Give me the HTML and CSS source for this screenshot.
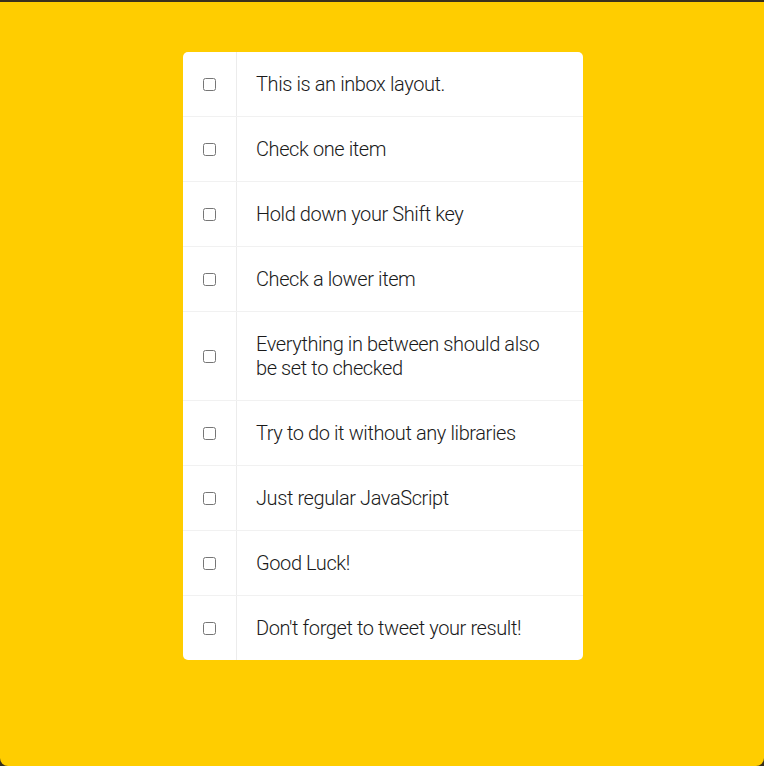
FILE: index.html
```html
<!DOCTYPE html>
<html lang="en">
<head>
<meta charset="UTF-8">
<title>Hold Shift to Check Checkboxes</title>
<link rel="stylesheet" href="styles.css">
</head>
<body>
  <div class="inbox">
    <div class="item">
      <input type="checkbox">
      <p>This is an inbox layout.</p>
    </div>
    <div class="item">
      <input type="checkbox">
      <p>Check one item</p>
    </div>
    <div class="item">
      <input type="checkbox">
      <p>Hold down your Shift key</p>
    </div>
    <div class="item">
      <input type="checkbox">
      <p>Check a lower item</p>
    </div>
    <div class="item">
      <input type="checkbox">
      <p>Everything in between should also be set to checked</p>
    </div>
    <div class="item">
      <input type="checkbox">
      <p>Try to do it without any libraries</p>
    </div>
    <div class="item">
      <input type="checkbox">
      <p>Just regular JavaScript</p>
    </div>
    <div class="item">
      <input type="checkbox">
      <p>Good Luck!</p>
    </div>
    <div class="item">
      <input type="checkbox">
      <p>Don't forget to tweet your result!</p>
    </div>
  </div>
</body>
</html>
```

FILE: styles.css
```css
html {
  background: #3a301c;
  font-family: Roboto, "Liberation Sans", Arial, sans-serif;
  font-size: 20px;
  font-weight: 300;
}

body {
  margin: 2px 0 0;
  min-height: calc(100vh - 2px);
  box-sizing: border-box;
  padding: 50px 0 50px 2px;
  background: #ffcd00;
  border-radius: 0 0 8px 8px;
}

.inbox {
  max-width: 400px;
  margin: 0 auto;
  background: #ffffff;
  border-radius: 5px;
}

.item {
  display: flex;
  align-items: center;
  border-bottom: 1px solid #f1f1f1;
}

.item:last-child {
  border-bottom: 0;
}

.item input[type="checkbox"] {
  margin: 20px;
  width: 13px;
  height: 13px;
}

.item p {
  margin: 0;
  padding: 20px 20px 20px 19px;
  flex: 1;
  line-height: 24px;
  letter-spacing: -0.4px;
  color: #1a1a1a;
  border-left: 1px solid #ececec;
}
```
